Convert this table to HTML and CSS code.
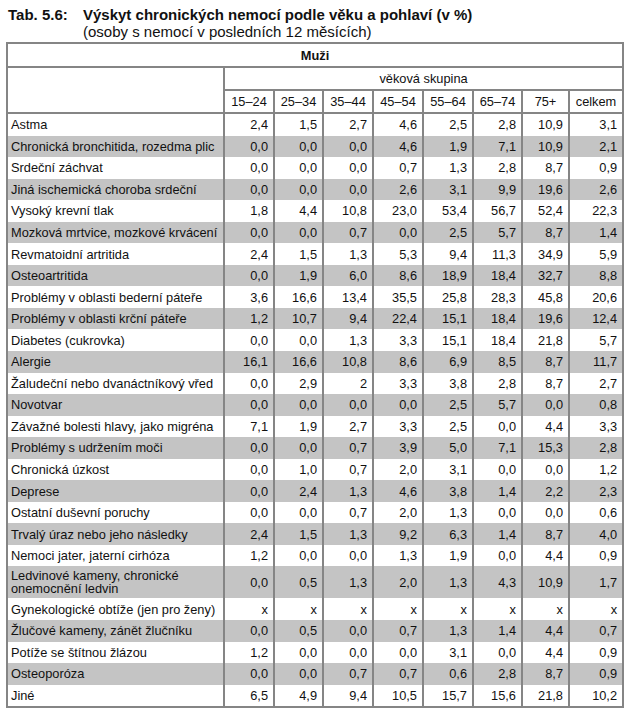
FILE: index.html
```html
<!DOCTYPE html>
<html lang="cs">
<head>
<meta charset="utf-8">
<title>Tab. 5.6</title>
<link rel="stylesheet" href="styles.css">
</head>
<body>
<div class="page">
  <div class="caption">
    <div class="cap-label">Tab. 5.6:</div>
    <div class="cap-text">
      <div class="cap-title">Výskyt chronických nemocí podle věku a pohlaví (v %)</div>
      <div class="cap-sub">(osoby s nemocí v posledních 12 měsících)</div>
    </div>
  </div>
  <table class="tbl">
    <colgroup>
      <col class="c-label"><col class="c-n"><col class="c-n49"><col class="c-n"><col class="c-n"><col class="c-n"><col class="c-n49"><col class="c-n47"><col class="c-tot">
    </colgroup>
    <thead>
      <tr class="h-sex"><th colspan="9">Muži</th></tr>
      <tr class="h-grp"><th rowspan="2" class="empty"></th><th colspan="8" class="grp">věková skupina</th></tr>
      <tr class="h-age"><th>15–24</th><th>25–34</th><th>35–44</th><th>45–54</th><th>55–64</th><th>65–74</th><th>75+</th><th>celkem</th></tr>
    </thead>
    <tbody>
      <tr><td>Astma</td><td>2,4</td><td>1,5</td><td>2,7</td><td>4,6</td><td>2,5</td><td>2,8</td><td>10,9</td><td>3,1</td></tr>
      <tr class="g"><td>Chronická bronchitida, rozedma plic</td><td>0,0</td><td>0,0</td><td>0,0</td><td>4,6</td><td>1,9</td><td>7,1</td><td>10,9</td><td>2,1</td></tr>
      <tr><td>Srdeční záchvat</td><td>0,0</td><td>0,0</td><td>0,0</td><td>0,7</td><td>1,3</td><td>2,8</td><td>8,7</td><td>0,9</td></tr>
      <tr class="g"><td>Jiná ischemická choroba srdeční</td><td>0,0</td><td>0,0</td><td>0,0</td><td>2,6</td><td>3,1</td><td>9,9</td><td>19,6</td><td>2,6</td></tr>
      <tr><td>Vysoký krevní tlak</td><td>1,8</td><td>4,4</td><td>10,8</td><td>23,0</td><td>53,4</td><td>56,7</td><td>52,4</td><td>22,3</td></tr>
      <tr class="g"><td>Mozková mrtvice, mozkové krvácení</td><td>0,0</td><td>0,0</td><td>0,7</td><td>0,0</td><td>2,5</td><td>5,7</td><td>8,7</td><td>1,4</td></tr>
      <tr><td>Revmatoidní artritida</td><td>2,4</td><td>1,5</td><td>1,3</td><td>5,3</td><td>9,4</td><td>11,3</td><td>34,9</td><td>5,9</td></tr>
      <tr class="g"><td>Osteoartritida</td><td>0,0</td><td>1,9</td><td>6,0</td><td>8,6</td><td>18,9</td><td>18,4</td><td>32,7</td><td>8,8</td></tr>
      <tr><td>Problémy v oblasti bederní páteře</td><td>3,6</td><td>16,6</td><td>13,4</td><td>35,5</td><td>25,8</td><td>28,3</td><td>45,8</td><td>20,6</td></tr>
      <tr class="g"><td>Problémy v oblasti krční páteře</td><td>1,2</td><td>10,7</td><td>9,4</td><td>22,4</td><td>15,1</td><td>18,4</td><td>19,6</td><td>12,4</td></tr>
      <tr><td>Diabetes (cukrovka)</td><td>0,0</td><td>0,0</td><td>1,3</td><td>3,3</td><td>15,1</td><td>18,4</td><td>21,8</td><td>5,7</td></tr>
      <tr class="g"><td>Alergie</td><td>16,1</td><td>16,6</td><td>10,8</td><td>8,6</td><td>6,9</td><td>8,5</td><td>8,7</td><td>11,7</td></tr>
      <tr><td>Žaludeční nebo dvanáctníkový vřed</td><td>0,0</td><td>2,9</td><td>2</td><td>3,3</td><td>3,8</td><td>2,8</td><td>8,7</td><td>2,7</td></tr>
      <tr class="g"><td>Novotvar</td><td>0,0</td><td>0,0</td><td>0,0</td><td>0,0</td><td>2,5</td><td>5,7</td><td>0,0</td><td>0,8</td></tr>
      <tr><td>Závažné bolesti hlavy, jako migréna</td><td>7,1</td><td>1,9</td><td>2,7</td><td>3,3</td><td>2,5</td><td>0,0</td><td>4,4</td><td>3,3</td></tr>
      <tr class="g"><td>Problémy s udržením moči</td><td>0,0</td><td>0,0</td><td>0,7</td><td>3,9</td><td>5,0</td><td>7,1</td><td>15,3</td><td>2,8</td></tr>
      <tr><td>Chronická úzkost</td><td>0,0</td><td>1,0</td><td>0,7</td><td>2,0</td><td>3,1</td><td>0,0</td><td>0,0</td><td>1,2</td></tr>
      <tr class="g"><td>Deprese</td><td>0,0</td><td>2,4</td><td>1,3</td><td>4,6</td><td>3,8</td><td>1,4</td><td>2,2</td><td>2,3</td></tr>
      <tr><td>Ostatní duševní poruchy</td><td>0,0</td><td>0,0</td><td>0,7</td><td>2,0</td><td>1,3</td><td>0,0</td><td>0,0</td><td>0,6</td></tr>
      <tr class="g"><td>Trvalý úraz nebo jeho následky</td><td>2,4</td><td>1,5</td><td>1,3</td><td>9,2</td><td>6,3</td><td>1,4</td><td>8,7</td><td>4,0</td></tr>
      <tr><td>Nemoci jater, jaterní cirhóza</td><td>1,2</td><td>0,0</td><td>0,0</td><td>1,3</td><td>1,9</td><td>0,0</td><td>4,4</td><td>0,9</td></tr>
      <tr class="g two"><td>Ledvinové kameny, chronické onemocnění ledvin</td><td>0,0</td><td>0,5</td><td>1,3</td><td>2,0</td><td>1,3</td><td>4,3</td><td>10,9</td><td>1,7</td></tr>
      <tr><td>Gynekologické obtíže (jen pro ženy)</td><td>x</td><td>x</td><td>x</td><td>x</td><td>x</td><td>x</td><td>x</td><td>x</td></tr>
      <tr class="g"><td>Žlučové kameny, zánět žlučníku</td><td>0,0</td><td>0,5</td><td>0,0</td><td>0,7</td><td>1,3</td><td>1,4</td><td>4,4</td><td>0,7</td></tr>
      <tr><td>Potíže se štítnou žlázou</td><td>1,2</td><td>0,0</td><td>0,0</td><td>0,0</td><td>3,1</td><td>0,0</td><td>4,4</td><td>0,9</td></tr>
      <tr class="g"><td>Osteoporóza</td><td>0,0</td><td>0,0</td><td>0,7</td><td>0,7</td><td>0,6</td><td>2,8</td><td>8,7</td><td>0,9</td></tr>
      <tr><td>Jiné</td><td>6,5</td><td>4,9</td><td>9,4</td><td>10,5</td><td>15,7</td><td>15,6</td><td>21,8</td><td>10,2</td></tr>
    </tbody>
  </table>
</div>
</body>
</html>
```

FILE: styles.css
```css
html, body {
  margin: 0;
  padding: 0;
  background: #fff;
}

.page {
  padding: 7px 0 0 6px;
  font-family: "Liberation Sans", Arial, sans-serif;
  color: #111;
}

.caption {
  display: flex;
  align-items: flex-start;
  padding-left: 2px;
  margin-bottom: 2px;
}

.cap-label {
  width: 75px;
  font-weight: bold;
  font-size: 15px;
  line-height: 16px;
}

.cap-title {
  font-weight: bold;
  font-size: 15px;
  line-height: 16px;
}

.cap-sub {
  font-size: 15px;
  line-height: 17px;
}

.tbl {
  border-collapse: collapse;
  table-layout: fixed;
  width: 616px;
  border: 2px solid #858585;
  font-size: 12.8px;
}

.c-label { width: 217px; }
.c-n { width: 50px; }
.c-n49 { width: 49px; }
.c-n47 { width: 47px; }
.c-tot { width: 54px; }

.tbl th {
  font-weight: normal;
  border: 2px solid #858585;
  padding: 0;
  text-align: center;
}

.h-sex th {
  height: 22px;
  font-weight: bold;
}

.h-grp th {
  height: 21px;
}

.h-age th {
  height: 21px;
}

.tbl td {
  border: 0;
  border-left: 2px solid #858585;
  border-right: 2px solid #858585;
  padding: 0 5px 0 6px;
  text-align: right;
  height: 21.55px;
  line-height: 13px;
}

.tbl td:first-child {
  text-align: left;
  padding: 0 0 0 3px;
}

.tbl tr.g td {
  background: #c4c4c4;
}

.tbl tr.two td {
  height: 32px;
}
```
